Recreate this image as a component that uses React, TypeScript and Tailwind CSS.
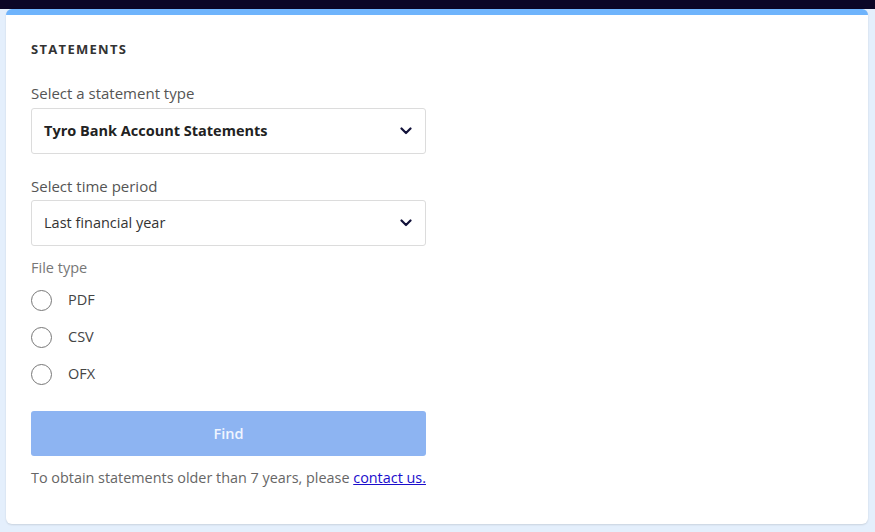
import { useState } from "react";

const fileTypes = ["PDF", "CSV", "OFX"];

const Chevron = () => (
  <svg width="12" height="8" viewBox="0 0 12 8" fill="none">
    <path d="M1.5 1.5L6 6L10.5 1.5" stroke="#12123a" strokeWidth="2.2" strokeLinecap="round" strokeLinejoin="round" />
  </svg>
);

const App = () => {
  const [fileType, setFileType] = useState("");

  return (
    <div className="min-h-[532px] bg-[#e4effc] font-['Open_Sans',sans-serif]">
      <div className="h-[9px] bg-[#0b0626]" />
      <div className="ml-[6px] mr-[7px] rounded-[6px] border-t-[6px] border-[#6fb4fc] bg-white pb-[36px] pl-[25px] pr-[25px] pt-[25px] shadow-[0_1px_2px_rgba(0,0,0,0.12)]">
        {/* TITLE */}
        <h2 className="text-[13px] font-bold leading-[18px] tracking-[1.3px] text-[#333]">STATEMENTS</h2>

        {/* STATEMENT TYPE */}
        <label className="mt-[25px] block text-[15px] leading-[20px] text-[#555]">Select a statement type</label>
        <div className="mt-[5px] flex h-[46px] w-[395px] items-center justify-between rounded-[3px] border border-[#dcdcdc] pl-[12px] pr-[13px]">
          <span className="text-[14.5px] font-bold text-[#222]">Tyro Bank Account Statements</span>
          <Chevron />
        </div>

        {/* TIME PERIOD */}
        <label className="mt-[22px] block text-[15px] leading-[20px] text-[#555]">Select time period</label>
        <div className="mt-[4px] flex h-[46px] w-[395px] items-center justify-between rounded-[3px] border border-[#dcdcdc] pl-[12px] pr-[13px]">
          <span className="text-[14.5px] text-[#333]">Last financial year</span>
          <Chevron />
        </div>

        {/* FILE TYPE */}
        <div className="mt-[12px] text-[14.5px] leading-[20px] text-[#777]">File type</div>
        <div className="mt-[11px] flex flex-col gap-[15px]">
          {fileTypes.map((t) => (
            <label key={t} className="flex h-[22px] cursor-pointer items-center" onClick={() => setFileType(t)}>
              <span className="flex size-[21px] items-center justify-center rounded-full border border-[#777]">
                {fileType === t && <span className="size-[11px] rounded-full bg-[#3b82f6]" />}
              </span>
              <span className="ml-[16px] text-[14.5px] text-[#444]">{t}</span>
            </label>
          ))}
        </div>

        {/* FIND BUTTON */}
        <button className="mt-[26px] flex h-[45px] w-[395px] items-center justify-center rounded-[3px] bg-[#8db4f2] text-[14.5px] font-semibold text-[#f0f5ff]">
          Find
        </button>

        <p className="mt-[12px] text-[14.4px] leading-[20px] text-[#666]">
          To obtain statements older than 7 years, please{" "}
          <a href="#" className="text-[#1a0dcc] underline">contact us.</a>
        </p>
      </div>
    </div>
  );
};

export default App;
